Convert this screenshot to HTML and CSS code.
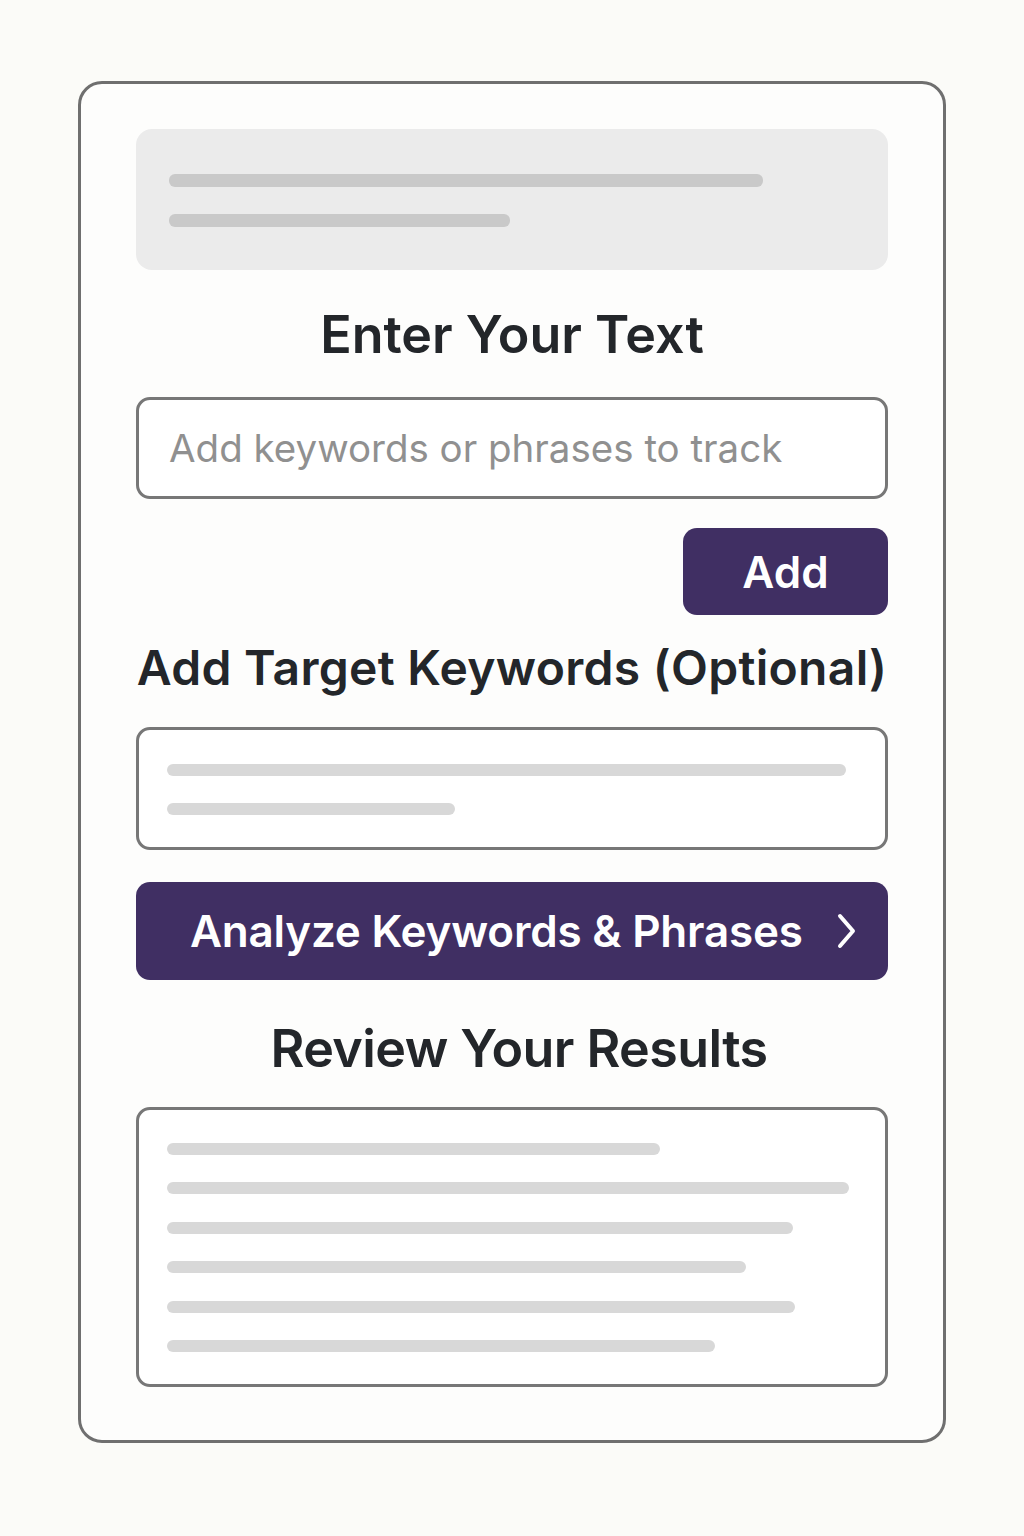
FILE: index.html
```html
<!DOCTYPE html>
<html lang="en">
<head>
    <meta charset="UTF-8">
    <meta name="viewport" content="width=device-width, initial-scale=1.0">
    <title>Keyword Tracker</title>
    <link rel="stylesheet" href="styles.css">
</head>
<body>
    <div class="card">
        <div class="intro">
            <div class="bar dark w594"></div>
            <div class="bar dark w341"></div>
        </div>

        <h2 class="title">Enter Your Text</h2>
        <div class="text-input">
            <input type="text" id="keyword" placeholder="Add keywords or phrases to track">
        </div>
        <div class="add-row">
            <button class="btn add-btn" id="add-btn">Add</button>
        </div>

        <h2 class="title small">Add Target Keywords (Optional)</h2>
        <div class="box keywords">
            <div class="bar w679"></div>
            <div class="bar w288"></div>
        </div>

        <button class="btn analyze-btn" id="analyze-btn">
            <span>Analyze Keywords &amp; Phrases</span>
            <svg class="chevron" width="22" height="36" viewBox="0 0 22 36">
                <path d="M4 3 L17 18 L4 33" fill="none" stroke="#fff" stroke-width="4" stroke-linecap="round" stroke-linejoin="round"/>
            </svg>
        </button>

        <h2 class="title results-title">Review Your Results</h2>
        <div class="box results">
            <div class="bar w493"></div>
            <div class="bar w682"></div>
            <div class="bar w626"></div>
            <div class="bar w579"></div>
            <div class="bar w628"></div>
            <div class="bar w548"></div>
        </div>
    </div>
</body>
</html>
```

FILE: styles.css
```css
body {
    margin: 0;
    background-color: #fbfbf8;
    font-family: Inter, Roboto, "Liberation Sans", sans-serif;
    color: #23262a;
}

.card {
    box-sizing: border-box;
    width: 868px;
    margin: 81px 0 0 78px;
    padding: 45px 55px 53px;
    border: 3px solid #6f6f6f;
    border-radius: 24px;
    background-color: #fdfdfc;
}

.intro {
    height: 141px;
    box-sizing: border-box;
    padding: 45px 33px 0;
    background-color: #ebebeb;
    border-radius: 16px;
}

.bar {
    height: 12px;
    border-radius: 6px;
    background-color: #d8d8d8;
    margin-bottom: 27px;
}

.bar.dark {
    height: 13px;
    background-color: #c9c9c9;
}

.w594 { width: 594px; }
.w341 { width: 341px; }
.w679 { width: 679px; }
.w288 { width: 288px; }
.w493 { width: 493px; }
.w682 { width: 682px; }
.w626 { width: 626px; }
.w579 { width: 579px; }
.w628 { width: 628px; }
.w548 { width: 548px; }

.title {
    margin: 35px 0 0;
    font-size: 52px;
    line-height: 60px;
    font-weight: 600;
    text-align: center;
    letter-spacing: 0;
}

.title.small {
    margin-top: 25px;
    font-size: 48px;
    line-height: 56px;
    letter-spacing: 0.3px;
}

.title.results-title {
    margin-top: 39px;
    padding-left: 14px;
    letter-spacing: -0.6px;
}

.text-input {
    margin-top: 32px;
}

.text-input input {
    box-sizing: border-box;
    width: 100%;
    height: 102px;
    padding: 0 30px;
    border: 3px solid #777;
    border-radius: 14px;
    background-color: #fff;
    font-family: Inter, Roboto, "Liberation Sans", sans-serif;
    font-size: 38.5px;
    color: #333;
    outline: none;
}

.text-input input::placeholder {
    color: #909090;
}

.add-row {
    display: flex;
    justify-content: flex-end;
    margin-top: 29px;
}

.btn {
    border: none;
    background-color: #402f63;
    color: #fff;
    font-family: Inter, Roboto, "Liberation Sans", sans-serif;
    font-weight: 600;
    cursor: pointer;
}

.add-btn {
    width: 205px;
    height: 87px;
    border-radius: 14px;
    font-size: 44px;
}

.box {
    box-sizing: border-box;
    border: 3px solid #777;
    border-radius: 14px;
    background-color: #fff;
    padding-left: 28px;
}

.keywords {
    margin-top: 31px;
    height: 123px;
    padding-top: 34px;
}

.results {
    margin-top: 28px;
    height: 280px;
    padding-top: 33px;
}

.results .bar {
    margin-bottom: 27.4px;
}

.analyze-btn {
    display: flex;
    align-items: center;
    justify-content: space-between;
    box-sizing: border-box;
    width: 100%;
    height: 98px;
    margin-top: 32px;
    padding: 0 30px 0 54px;
    border-radius: 14px;
    font-size: 44px;
    letter-spacing: -0.2px;
}
```
